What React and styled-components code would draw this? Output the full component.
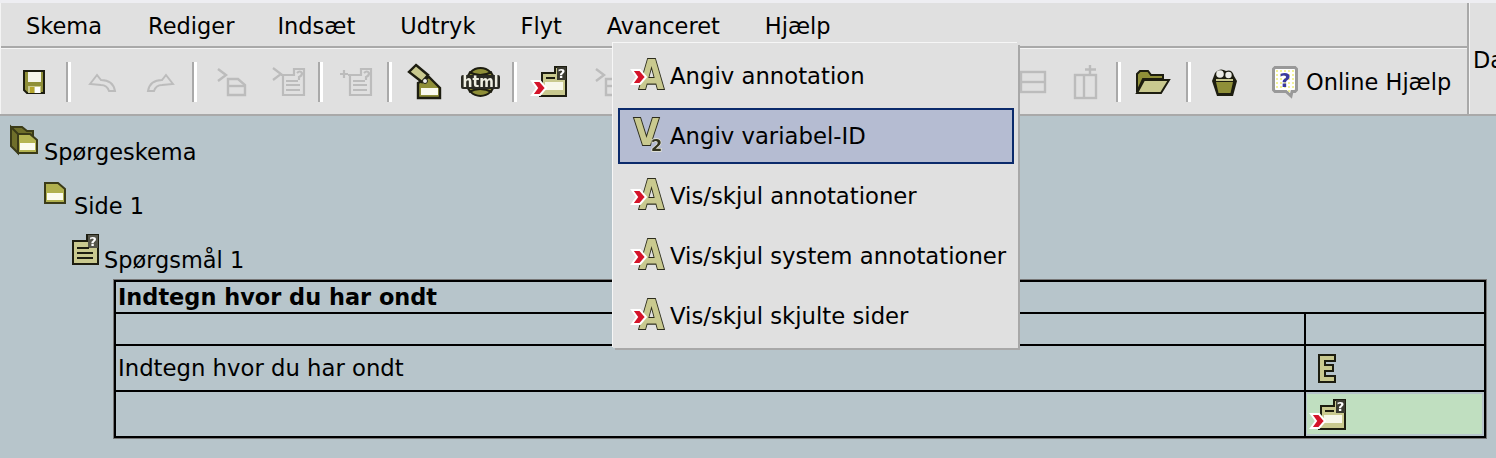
import styled, { createGlobalStyle } from "styled-components";

const INK = "#1d1d10";
const OLIVE = "#8f8f38";
const KHAKI = "#c9c98f";
const RED = "#d4142a";
const OFF = "#bcbcbc";

const GlobalStyle = createGlobalStyle`
html, body {
    margin: 0;
    height: 458px;
    overflow: hidden;
    background: #b7c5cb;
}
body {
    font-family: "DejaVu Sans", Verdana, sans-serif;
    font-size: 22.45px;
    color: #000000;
}
`

function Icon({ w, h, children }) {
    return <IconSvg width={w} height={h} viewBox={`0 0 ${w} ${h}`}>{children}</IconSvg>
}

function Chevron({ x = 0, y = 0 }) {
    const points = `${x},${y} ${x + 8},${y} ${x + 14},${y + 7} ${x + 8},${y + 14} ${x},${y + 14} ${x + 5},${y + 7}`;
    return <polygon points={points} fill={RED} stroke="#ffffff" strokeWidth="2" />
}

const SaveIcon = () => (
    <Icon w={24} h={26}>
        <path d="M2 2H22V24H5L2 21Z" fill={OLIVE} stroke={INK} strokeWidth="2" />
        <rect x="6" y="3" width="13" height="10" fill="#f4f4ea" />
        <rect x="6" y="17" width="13" height="7" fill={KHAKI} />
        <rect x="13" y="18" width="5" height="6" fill="#ffffff" />
        <rect x="8" y="18" width="4" height="6" fill="#b5a52c" />
    </Icon>
)

const UndoIcon = ({ flip }) => (
    <Icon w={28} h={20}>
        <g transform={flip ? "translate(28 0) scale(-1 1)" : undefined} fill="none" stroke={OFF} strokeWidth="2">
            <path d="M2 12L9 3L13 8Q25 8 27 19H21Q19 13 13 13Z" />
        </g>
    </Icon>
)

const NewPageIcon = () => (
    <Icon w={30} h={28}>
        <g fill="none" stroke={OFF} strokeWidth="2.4">
            <polyline points="1,1 9,7 1,13" />
            <path d="M11 11H21L28 17V27H11Z" />
            <path d="M11 18H28" />
        </g>
    </Icon>
)

const NewQuestionIcon = ({ chevron = true }) => (
    <Icon w={33} h={29}>
        <g fill="none" stroke={OFF} strokeWidth="2.2">
            {chevron && <polyline points="1,1 9,7 1,13" />}
            {!chevron && <path d="M1 7H9M5 3V11" />}
            <path d="M9 8H22V2H32V28H11V8" />
            <path d="M14 14H26M14 18H28M14 23H28" />
            <path d="M25 6Q28 3 30 6Q30 9 27 10V13" />
        </g>
    </Icon>
)

const EditPageIcon = () => (
    <Icon w={33} h={35}>
        <path d="M10 19L21 13L26 18L32 24V34H10Z" fill={OLIVE} stroke={INK} strokeWidth="2.4" />
        <rect x="13" y="24" width="17" height="7" fill="#fbfbf0" />
        <polygon points="8,1 20,11 14,18 1,8" fill={KHAKI} stroke={INK} strokeWidth="2.4" />
        <circle cx="17" cy="17" r="2.5" fill="#eeeeee" stroke={INK} />
    </Icon>
)

const HtmlIcon = () => (
    <Icon w={39} h={30}>
        <circle cx="19.5" cy="15" r="14" fill={OLIVE} stroke={INK} strokeWidth="2" />
        <path d="M8 5Q19 11 31 5M8 25Q19 19 31 25" fill="none" stroke={INK} strokeWidth="2" />
        <rect x="0" y="8" width="39" height="14" rx="2" fill="#2a2a22" />
        <SvgLabel x="19.5" y="20" textAnchor="middle" fontSize="15" fontWeight="700" fill="#efefe2" textLength="36" lengthAdjust="spacingAndGlyphs">html</SvgLabel>
    </Icon>
)

const QuestionRedIcon = () => (
    <Icon w={36} h={31}>
        <path d="M11 7H24V1H35V30H9V23H11Z" fill={KHAKI} stroke={INK} strokeWidth="2" />
        <rect x="26" y="1" width="9" height="13" fill="#3a3a30" />
        <SvgLabel x="30.5" y="12" textAnchor="middle" fontSize="13" fontWeight="700" fill="#ffffff">?</SvgLabel>
        <rect x="15" y="11" width="9" height="2" fill={INK} />
        <rect x="14" y="16" width="18" height="8" fill="#f7f7ea" />
        <Chevron x={1} y={15} />
    </Icon>
)

const SplitIcon = () => (
    <Icon w={40} h={24}>
        <g fill="none" stroke={OFF} strokeWidth="2.4">
            <rect x="15" y="2" width="24" height="20" />
            <path d="M15 12H39" />
        </g>
    </Icon>
)

const AddColumnIcon = () => (
    <Icon w={23} h={35}>
        <g fill="none" stroke={OFF} strokeWidth="2.4">
            <rect x="1" y="11" width="21" height="23" />
            <path d="M10 11V34" />
            <path d="M16 1V11M11 5.500H22" />
        </g>
    </Icon>
)

const FolderIcon = () => (
    <Icon w={35} h={24}>
        <path d="M2 22V4L5 1H13L16 5H28V9H8L2 22Z" fill={OLIVE} stroke={INK} strokeWidth="2" />
        <path d="M2 23L9 10H34L26 23Z" fill={KHAKI} stroke={INK} strokeWidth="2" />
    </Icon>
)

const BucketIcon = () => (
    <Icon w={25} h={28}>
        <path d="M3 5Q8 -1 14 3Q20 1 22 8L25 13L21 28H5L0 13Z" fill={INK} />
        <circle cx="8" cy="6" r="3.800" fill="#ecece6" />
        <circle cx="16.500" cy="7" r="3.200" fill="#ecece6" />
        <rect x="4" y="11" width="17" height="2" fill={KHAKI} />
        <path d="M4 14H21L18.500 25H6.500Z" fill={OLIVE} />
    </Icon>
)

const HelpIcon = () => (
    <Icon w={26} h={31}>
        <defs>
            <pattern id="helpDots" width="4" height="4" patternUnits="userSpaceOnUse">
                <rect width="4" height="4" fill="#ffffff" />
                <rect width="2" height="2" fill="#f2f29a" />
            </pattern>
        </defs>
        <path d="M3 1.500H23L24.500 3V24L23 25.500H20L19 30L14 25.500H3L1.500 24V3Z" fill="url(#helpDots)" stroke="#999999" strokeWidth="3" />
        <SvgLabel x="13" y="21" textAnchor="middle" fontSize="20" fontWeight="700" fill="#3a3a9e">?</SvgLabel>
    </Icon>
)

const AnnotationIcon = () => (
    <Icon w={34} h={28}>
        <SvgLabel x="9" y="27" fontSize="41" fontWeight="700" fontFamily="'Liberation Serif', serif" fill={KHAKI} stroke="#2c2c1c" strokeWidth="2.200" paintOrder="stroke" textLength="25" lengthAdjust="spacingAndGlyphs">A</SvgLabel>
        <Chevron x={2} y={8} />
    </Icon>
)

const VariableIcon = () => (
    <Icon w={34} h={36}>
        <SvgLabel x="4" y="27" fontSize="38" fontWeight="700" fontFamily="'Liberation Serif', serif" fill={KHAKI} stroke="#2c2c1c" strokeWidth="2.200" paintOrder="stroke" textLength="25" lengthAdjust="spacingAndGlyphs">V</SvgLabel>
        <SvgLabel x="21" y="33" fontSize="16" fontWeight="700" fontFamily="'Liberation Serif', serif" fill="#33331f" stroke="#e8e8d8" strokeWidth="1.400" paintOrder="stroke">2</SvgLabel>
    </Icon>
)

const SurveyIcon = () => (
    <Icon w={28} h={28}>
        <path d="M1 1H12L17 5H23V11H1Z" fill="#6f6f2a" stroke="#3b3b18" strokeWidth="2" />
        <path d="M1 1V20L8 27V8Z" fill="#6f6f2a" stroke="#3b3b18" strokeWidth="2" />
        <path d="M8 8H20L27 14V27H8Z" fill="#b4b452" stroke="#3b3b18" strokeWidth="2" />
        <rect x="10" y="17" width="15" height="7" fill="#fbfbee" />
    </Icon>
)

const PageIcon = () => (
    <Icon w={22} h={22}>
        <path d="M1 1H14L21 7V21H1Z" fill="#b0b04e" stroke="#3b3b18" strokeWidth="2" />
        <rect x="3" y="11" width="16" height="7" fill="#fbfbee" />
    </Icon>
)

const QuestionIcon = () => (
    <Icon w={27} h={31}>
        <path d="M1 7H15V1H26V30H1Z" fill={KHAKI} stroke={INK} strokeWidth="2" />
        <rect x="16" y="1" width="10" height="13" fill="#55554a" />
        <SvgLabel x="21" y="12" textAnchor="middle" fontSize="13" fontWeight="700" fill="#ffffff">?</SvgLabel>
        <path d="M5 14H17M5 19H21M5 24H21" stroke={INK} strokeWidth="2" />
    </Icon>
)

const ElementIcon = () => (
    <Icon w={18} h={29}>
        <path d="M1 1H17V7H7V11H15V17H7V22H17V28H1Z" fill={KHAKI} stroke={INK} strokeWidth="2" />
    </Icon>
)

const MENUS = [
    { label: "Skema", gap: 0 },
    { label: "Rediger", gap: 46 },
    { label: "Indsæt", gap: 43 },
    { label: "Udtryk", gap: 45 },
    { label: "Flyt", gap: 45 },
    { label: "Avanceret", gap: 45 },
    { label: "Hjælp", gap: 45 },
];

const ADVANCED = [
    { label: "Angiv annotation" },
    { label: "Angiv variabel-ID", active: true, variable: true },
    { label: "Vis/skjul annotationer" },
    { label: "Vis/skjul system annotationer" },
    { label: "Vis/skjul skjulte sider" },
];

export default function App() {
    return (
        <Page>
            <GlobalStyle />
            <Header>
                <Bars>
                    <MenuBar>
                        {MENUS.map((menu) => (
                            <MenuLabel key={menu.label} $gap={menu.gap}>{menu.label}</MenuLabel>
                        ))}
                    </MenuBar>
                    <ToolBar>
                        <Tool $gap={0}><SaveIcon /></Tool>
                        <Separator $gap={20} />
                        <Tool $gap={17}><UndoIcon /></Tool>
                        <Tool $gap={31}><UndoIcon flip /></Tool>
                        <Separator $gap={17} />
                        <Tool $gap={20}><NewPageIcon /></Tool>
                        <Tool $gap={25}><NewQuestionIcon /></Tool>
                        <Separator $gap={13} />
                        <Tool $gap={16}><NewQuestionIcon chevron={false} /></Tool>
                        <Separator $gap={15} />
                        <Tool $gap={16}><EditPageIcon /></Tool>
                        <Tool $gap={20}><HtmlIcon /></Tool>
                        <Separator $gap={12} />
                        <Tool $gap={14}><QuestionRedIcon /></Tool>
                        <Tool $gap={28}><NewPageIcon /></Tool>
                        <Tool $gap={381}><SplitIcon /></Tool>
                        <Tool $gap={28}><AddColumnIcon /></Tool>
                        <Separator $gap={19} />
                        <Tool $gap={14}><FolderIcon /></Tool>
                        <Separator $gap={16} />
                        <Tool $gap={21}><BucketIcon /></Tool>
                        <Tool $gap={35}><HelpIcon /></Tool>
                        <ToolText>Online Hjælp</ToolText>
                    </ToolBar>
                </Bars>
                <SidePanel>Da</SidePanel>
            </Header>

            <Canvas>
                <TreeRow $indent={10} $after={17}>
                    <SurveyIcon />
                    <TreeLabel $top={13} $gap={6}>Spørgeskema</TreeLabel>
                </TreeRow>
                <TreeRow $indent={44} $after={15}>
                    <PageIcon />
                    <TreeLabel $top={11} $gap={8}>Side 1</TreeLabel>
                </TreeRow>
                <TreeRow $indent={72} $after={7}>
                    <QuestionIcon />
                    <TreeLabel $top={13} $gap={5}>Spørgsmål 1</TreeLabel>
                </TreeRow>
                <QuestionTable>
                    <TableRow $height={30}>
                        <Cell $bold>Indtegn hvor du har ondt</Cell>
                    </TableRow>
                    <TableRow $height={30}>
                        <Cell />
                        <SideCell />
                    </TableRow>
                    <TableRow $height={44}>
                        <Cell>Indtegn hvor du har ondt</Cell>
                        <SideCell $inset={12}><ElementIcon /></SideCell>
                    </TableRow>
                    <TableRow $height={44} $last>
                        <Cell />
                        <SideCell>
                            <DropZone><QuestionRedIcon /></DropZone>
                        </SideCell>
                    </TableRow>
                </QuestionTable>
            </Canvas>

            <DropMenu>
                {ADVANCED.map((item) => (
                    <DropItem key={item.label} $active={item.active}>
                        <DropIcon>{item.variable ? <VariableIcon /> : <AnnotationIcon />}</DropIcon>
                        {item.label}
                    </DropItem>
                ))}
            </DropMenu>
        </Page>
    )
}

const Page = styled.div`
position: relative;
width: 1496px;
height: 458px;
overflow: hidden;
background-color: #b7c5cb;
`
const Header = styled.div`
display: flex;
height: 111px;
padding-top: 3px;
background-color: #e0e0e0;
box-shadow: inset 0 3px 0 #eeeef2;
border-bottom: 2px solid #a9a9a9;
`
const Bars = styled.div`
width: 1467px;
display: flex;
flex-direction: column;
border-left: 1px solid #f4f4f4;
box-sizing: border-box;
`
const MenuBar = styled.div`
height: 44px;
box-sizing: border-box;
display: flex;
align-items: center;
padding-left: 25px;
border-bottom: 2px solid #a9a9a9;
margin-top: 1px;
font-size: 22.5px;
`
const MenuLabel = styled.div`
margin-left: ${(p) => p.$gap}px;
line-height: 26px;
margin-top: 1px;
`
const ToolBar = styled.div`
flex: 1;
display: flex;
align-items: center;
padding-left: 21px;
border-top: 1px solid #f4f4f4;
`
const Tool = styled.div`
display: flex;
margin-left: ${(p) => p.$gap}px;
flex-shrink: 0;
`
const Separator = styled.div`
width: 2px;
height: 40px;
margin-left: ${(p) => p.$gap}px;
background-color: #a9a9a9;
border-right: 3px solid #ffffff;
flex-shrink: 0;
`
const ToolText = styled.div`
margin-left: 8px;
white-space: nowrap;
line-height: 26px;
`
const SidePanel = styled.div`
flex: 1;
border-left: 2px solid #a9a9a9;
box-shadow: inset 1px 0 0 #f4f4f4;
padding: 44px 0 0 4px;
line-height: 26px;
overflow: hidden;
`
const IconSvg = styled.svg`
display: block;
flex-shrink: 0;
overflow: visible;
filter: blur(0.35px);
`
const SvgLabel = styled.text`
font-family: "DejaVu Sans", sans-serif;
`
const Canvas = styled.div`
padding-top: 10px;
`
const TreeRow = styled.div`
display: flex;
align-items: flex-start;
margin-left: ${(p) => p.$indent}px;
margin-bottom: ${(p) => p.$after}px;
`
const TreeLabel = styled.div`
margin-top: ${(p) => p.$top}px;
margin-left: ${(p) => p.$gap}px;
line-height: 26px;
`
const QuestionTable = styled.div`
margin-left: 114px;
width: 1372px;
box-sizing: border-box;
border: 2px solid #000000;
box-shadow: 0 0 0 1px #777777;
`
const TableRow = styled.div`
display: flex;
height: ${(p) => p.$height}px;
border-bottom: ${(p) => (p.$last ? "0" : "2px solid #000000")};
`
const Cell = styled.div`
flex: 1;
display: flex;
align-items: center;
padding-left: 2px;
font-weight: ${(p) => (p.$bold ? 700 : 400)};
font-size: ${(p) => (p.$bold ? "22.45px" : "22.75px")};
line-height: 26px;
`
const SideCell = styled.div`
width: 178px;
display: flex;
align-items: center;
box-sizing: content-box;
border-left: 2px solid #000000;
padding-left: ${(p) => p.$inset || 0}px;
margin-right: ${(p) => -(p.$inset || 0)}px;
`
const DropZone = styled.div`
flex: 1;
align-self: stretch;
margin: 2px 2px 2px 1px;
display: flex;
align-items: center;
padding-left: 3px;
background-color: #c0dfc0;
`
const DropMenu = styled.div`
position: absolute;
left: 613px;
top: 43px;
width: 405px;
height: 305px;
box-sizing: border-box;
padding: 5px 4px 4px 5px;
display: flex;
flex-direction: column;
gap: 4px;
font-size: 22.75px;
background-color: #e0e0e0;
box-shadow: 2px 2px 0 #a8a8a8, -1px -1px 0 #f6f6f6;
`
const DropItem = styled.div`
height: 56px;
box-sizing: border-box;
display: flex;
align-items: center;
white-space: nowrap;
line-height: 26px;
background-color: ${(p) => (p.$active ? "#b5bcd2" : "transparent")};
border: 2px solid ${(p) => (p.$active ? "#0b2a6b" : "transparent")};
`
const DropIcon = styled.div`
width: 40px;
margin-left: 10px;
display: flex;
`
